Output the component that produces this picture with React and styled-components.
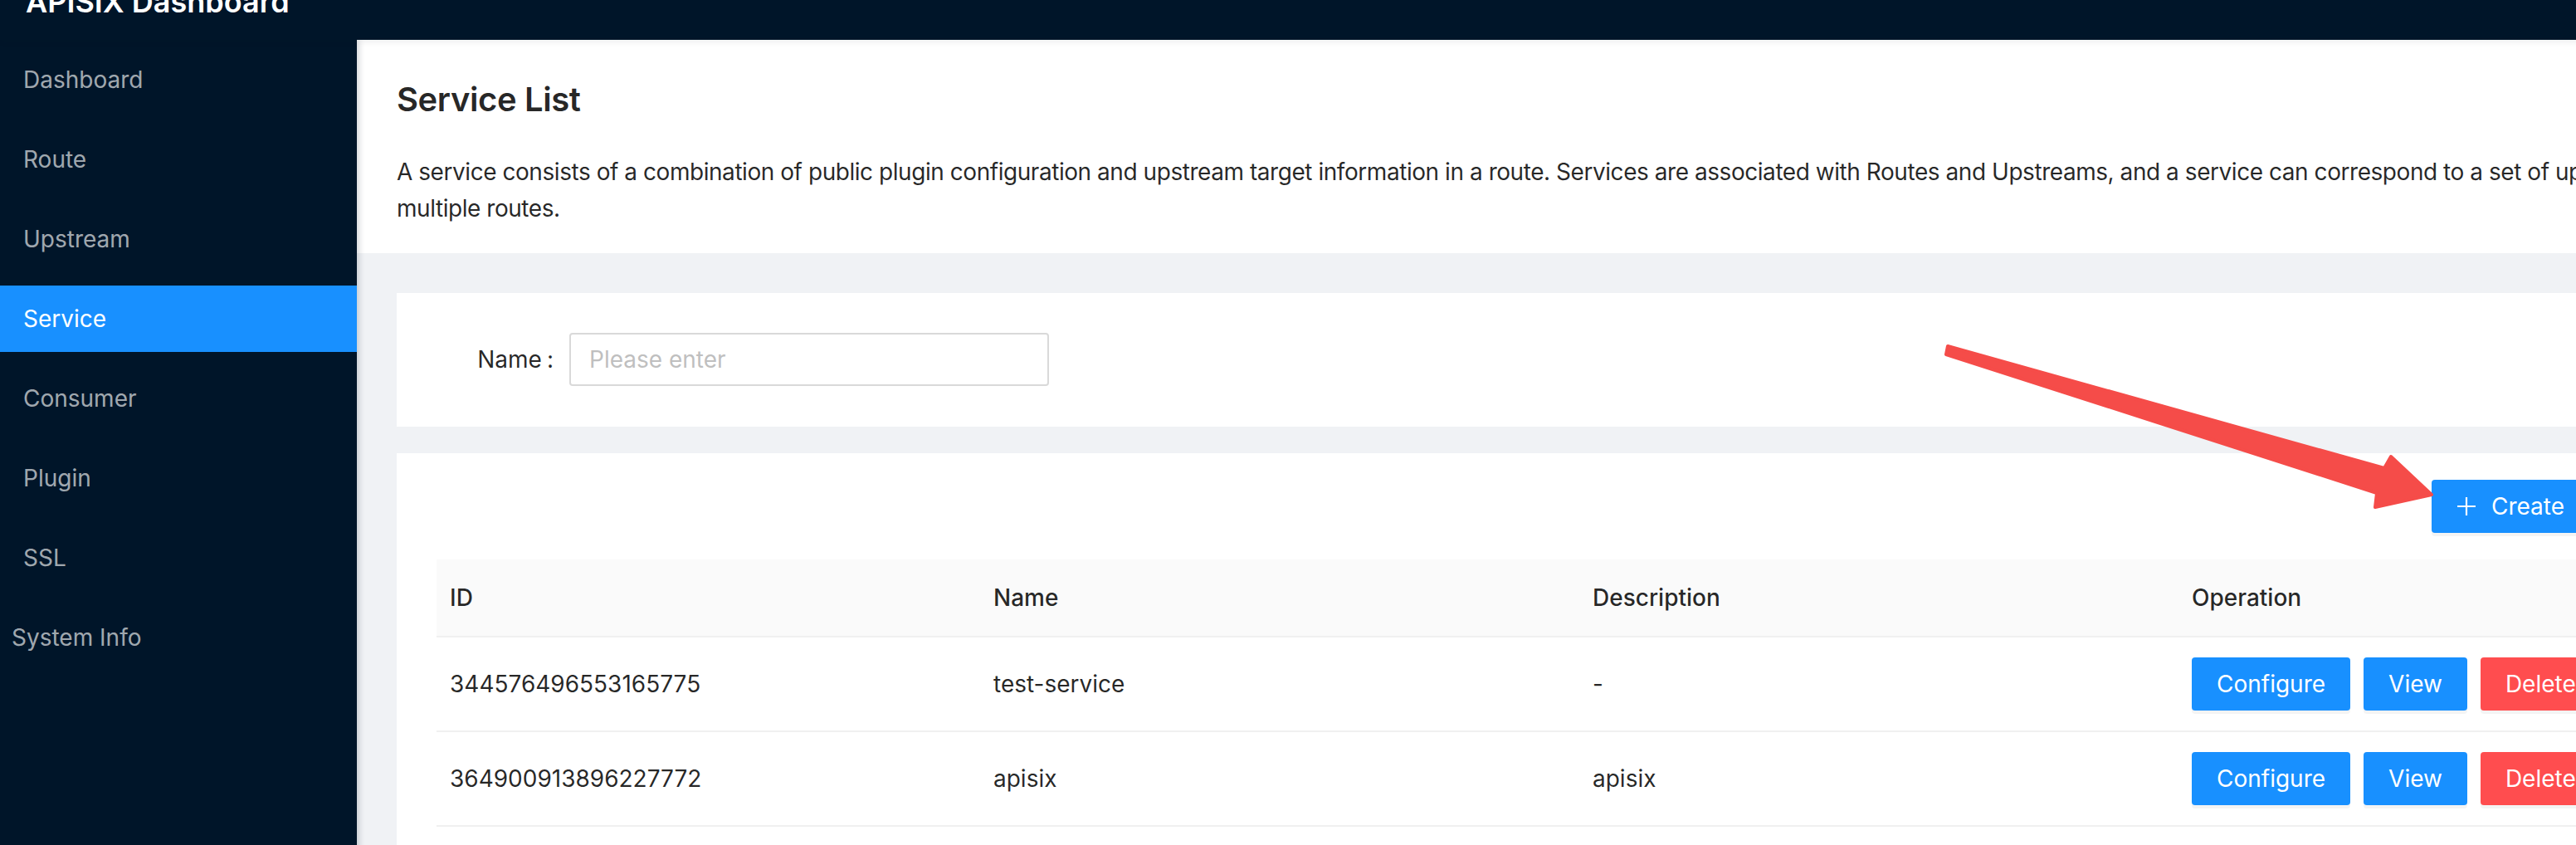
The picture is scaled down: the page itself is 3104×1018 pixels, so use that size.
import React from 'react';
import styled, { createGlobalStyle } from 'styled-components';

const GlobalStyle = createGlobalStyle`
  html, body {
    margin: 0;
    padding: 0;
    overflow: hidden;
    background: #f0f2f5;
  }
  body {
    width: 3104px;
    height: 1018px;
    font-family: Inter, "Noto Sans", "Liberation Sans", sans-serif;
  }
  * {
    box-sizing: border-box;
  }
`;

// the page is scrolled down by half the header, so it is pulled up here
const Page = styled.div`
  position: relative;
  width: 3216px;
  min-height: 1066px;
  margin-top: -48px;
  display: flex;
  flex-direction: column;
  color: rgba(0, 0, 0, 0.85);
`;

const Header = styled.header`
  position: relative;
  z-index: 2;
  height: 96px;
  padding: 4px 0 0 31px;
  display: flex;
  align-items: center;
  background: #001529;
  box-shadow: 0 2px 8px rgba(0, 21, 41, 0.08);
`;

const Title = styled.h1`
  margin: 0;
  color: #fff;
  font-size: 36px;
  font-weight: 600;
  line-height: 1;
`;

const Body = styled.div`
  flex: 1;
  display: flex;
`;

const Sider = styled.nav`
  position: relative;
  z-index: 1;
  width: 430px;
  flex-shrink: 0;
  padding-top: 8px;
  background: #001529;
  box-shadow: 2px 0 8px rgba(0, 21, 41, 0.2);
`;

const MenuItem = styled.div`
  height: 80px;
  margin-bottom: 16px;
  padding-left: ${(p) => p.indent}px;
  font-size: 28px;
  line-height: 80px;
  color: ${(p) => (p.active ? '#fff' : 'rgba(255, 255, 255, 0.65)')};
  background: ${(p) => (p.active ? '#1890ff' : 'transparent')};
`;

const Main = styled.main`
  flex: 1;
  min-width: 0;
  display: flex;
  flex-direction: column;
`;

const PageHeader = styled.section`
  padding: 44px 48px 32px;
  background: #fff;
  overflow: hidden;
`;

const PageTitle = styled.h2`
  margin: 0;
  font-size: 40px;
  font-weight: 600;
  line-height: 56px;
  letter-spacing: -0.4px;
  color: rgba(0, 0, 0, 0.85);
`;

const Desc = styled.p`
  margin: 37px 0 0;
  font-size: 28px;
  line-height: 44px;
  letter-spacing: -0.45px;
  white-space: nowrap;
`;

const Content = styled.div`
  padding: 48px 48px 0;
  display: flex;
  flex-direction: column;
  gap: 32px;
`;

const SearchCard = styled.div`
  padding: 48px 48px 49px;
  display: flex;
  align-items: center;
  background: #fff;
`;

const Label = styled.label`
  width: 160px;
  padding-right: 19px;
  text-align: right;
  font-size: 28px;
  line-height: 44px;
`;

const Colon = styled.span`
  margin-left: 6px;
`;

const Input = styled.input`
  width: 578px;
  height: 64px;
  padding: 0 22px;
  border: 2px solid #d9d9d9;
  border-radius: 4px;
  font-family: inherit;
  font-size: 28px;
  color: rgba(0, 0, 0, 0.85);
  outline: none;

  &::placeholder {
    color: #bfbfbf;
  }
`;

const TableCard = styled.div`
  padding: 32px 48px 0;
  background: #fff;
  min-height: 500px;
`;

const Toolbar = styled.div`
  height: 64px;
  margin-bottom: 32px;
  display: flex;
  justify-content: flex-end;
`;

const Button = styled.button`
  height: 64px;
  padding: 0 30px;
  display: inline-flex;
  align-items: center;
  gap: 18px;
  border: none;
  border-radius: 4px;
  font-family: inherit;
  font-size: 28px;
  color: #fff;
  background: ${(p) => (p.danger ? '#ff4d4f' : '#1890ff')};
  box-shadow: 0 4px 0 rgba(0, 0, 0, 0.045);
  white-space: nowrap;
`;

const Table = styled.table`
  width: 100%;
  table-layout: fixed;
  border-collapse: collapse;
`;

const HeadCell = styled.th`
  padding: 24px 16px;
  text-align: left;
  font-size: 28px;
  font-weight: 500;
  line-height: 44px;
  background: #fafafa;
  border-bottom: 2px solid #f0f0f0;
`;

const Cell = styled.td`
  padding: 24px 16px;
  font-size: 28px;
  line-height: 44px;
  vertical-align: middle;
  border-bottom: 2px solid #f0f0f0;
  white-space: nowrap;
`;

const Actions = styled.div`
  display: flex;
  gap: 16px;
`;

const Overlay = styled.svg`
  position: absolute;
  left: 0;
  top: 48px;
  z-index: 5;
  pointer-events: none;
`;

const PlusIcon = () => (
  <svg width="24" height="24" viewBox="0 0 24 24">
    <path d="M12 1v22M1 12h22" stroke="#fff" strokeWidth="2.2" fill="none" />
  </svg>
);

const menu = [
  { label: 'Dashboard' },
  { label: 'Route' },
  { label: 'Upstream' },
  { label: 'Service', active: true },
  { label: 'Consumer' },
  { label: 'Plugin' },
  { label: 'SSL' },
  { label: 'System Info', indent: 14 },
];

const services = [
  { id: '344576496553165775', name: 'test-service', desc: '-' },
  { id: '364900913896227772', name: 'apisix', desc: 'apisix' },
];

const App = () => {
  return (
    <>
      <GlobalStyle />
      <Page>
        <Header>
          <Title>APISIX Dashboard</Title>
        </Header>
        <Body>
          <Sider>
            {menu.map((m) => (
              <MenuItem key={m.label} active={m.active} indent={m.indent || 28}>
                {m.label}
              </MenuItem>
            ))}
          </Sider>
          <Main>
            <PageHeader>
              <PageTitle>Service List</PageTitle>
              <Desc>
                A service consists of a combination of public plugin configuration and upstream target information in a route. Services are associated with Routes and Upstreams, and a service can correspond to a set of upstream nodes and can be bound by
                <br />
                multiple routes.
              </Desc>
            </PageHeader>
            <Content>
              <SearchCard>
                <Label>
                  Name<Colon>:</Colon>
                </Label>
                <Input placeholder="Please enter" />
              </SearchCard>
              <TableCard>
                <Toolbar>
                  <Button>
                    <PlusIcon />
                    Create
                  </Button>
                </Toolbar>
                <Table>
                  <colgroup>
                    <col style={{ width: 655 }} />
                    <col style={{ width: 722 }} />
                    <col style={{ width: 722 }} />
                    <col />
                  </colgroup>
                  <thead>
                    <tr>
                      <HeadCell>ID</HeadCell>
                      <HeadCell>Name</HeadCell>
                      <HeadCell>Description</HeadCell>
                      <HeadCell>Operation</HeadCell>
                    </tr>
                  </thead>
                  <tbody>
                    {services.map((s) => (
                      <tr key={s.id}>
                        <Cell>{s.id}</Cell>
                        <Cell>{s.name}</Cell>
                        <Cell>{s.desc}</Cell>
                        <Cell>
                          <Actions>
                            <Button>Configure</Button>
                            <Button>View</Button>
                            <Button danger>Delete</Button>
                          </Actions>
                        </Cell>
                      </tr>
                    ))}
                  </tbody>
                </Table>
              </TableCard>
            </Content>
          </Main>
        </Body>
        <Overlay width="3104" height="1018" viewBox="0 0 3104 1018">
          <polygon
            points="2347,417 2873,564 2881,550 2930,596 2862,611 2864,594 2345,427"
            fill="#f54c49"
            stroke="#f54c49"
            strokeWidth="4"
            strokeLinejoin="round"
          />
        </Overlay>
      </Page>
    </>
  );
};

export default App;
